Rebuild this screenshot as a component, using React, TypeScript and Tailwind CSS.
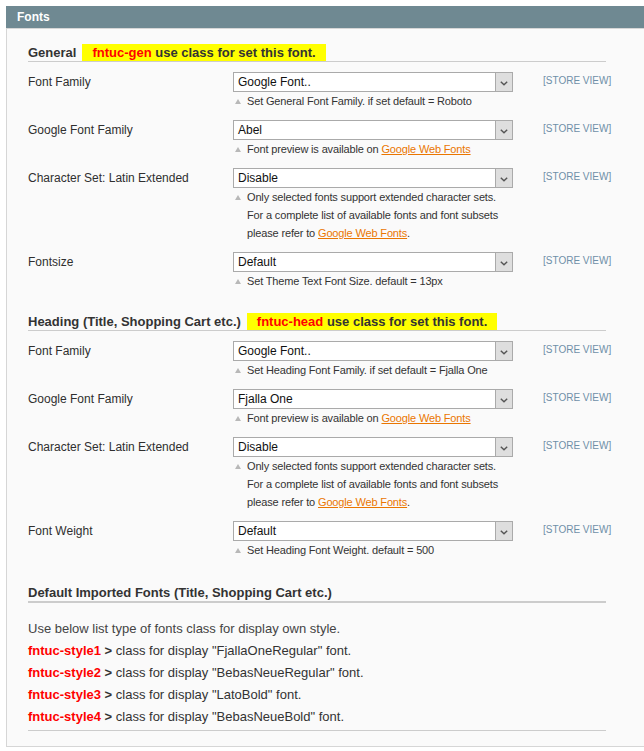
import React from "react";

type Row = { label: string; value: string; note: React.ReactNode[] };

const Link = () => <span className="text-[#ea7601] underline">Google Web Fonts</span>;

const charsetNote: React.ReactNode[] = [
  "Only selected fonts support extended character sets.",
  "For a complete list of available fonts and font subsets",
  <>please refer to <Link />.</>,
];

const previewNote: React.ReactNode[] = [<>Font preview is available on <Link /></>];

const general: Row[] = [
  { label: "Font Family", value: "Google Font..", note: ["Set General Font Family. if set default = Roboto"] },
  { label: "Google Font Family", value: "Abel", note: previewNote },
  { label: "Character Set: Latin Extended", value: "Disable", note: charsetNote },
  { label: "Fontsize", value: "Default", note: ["Set Theme Text Font Size. default = 13px"] },
];

const heading: Row[] = [
  { label: "Font Family", value: "Google Font..", note: ["Set Heading Font Family. if set default = Fjalla One"] },
  { label: "Google Font Family", value: "Fjalla One", note: previewNote },
  { label: "Character Set: Latin Extended", value: "Disable", note: charsetNote },
  { label: "Font Weight", value: "Default", note: ["Set Heading Font Weight. default = 500"] },
];

function Select({ value }: { value: string }) {
  return (
    <div className="flex h-[20px] border border-[#aaaaaa] bg-white">
      <div className="flex-1 pl-[4px] text-[12px] leading-[18px] text-[#111]">{value}</div>
      <div className="flex w-[17px] items-center justify-center border-l border-[#aaaaaa] bg-[#dedede]">
        <svg width="8" height="5" viewBox="0 0 8 5" className="mt-[2px]">
          <path d="M0.8 0.8 L4 3.8 L7.2 0.8" fill="none" stroke="#555" strokeWidth="1.4" />
        </svg>
      </div>
    </div>
  );
}

function Note({ lines }: { lines: React.ReactNode[] }) {
  return (
    <div className="flex text-[11px] leading-[18px] tracking-[-0.15px] text-[#333]">
      <div className="w-[14px] shrink-0 pl-[2px] pt-[7px]">
        <div className="h-0 w-0 border-b-[5px] border-l-[3px] border-r-[3px] border-b-[#b8b8b8] border-l-transparent border-r-transparent" />
      </div>
      <div className="whitespace-nowrap">
        {lines.map((l, i) => (
          <div key={i}>{l}</div>
        ))}
      </div>
    </div>
  );
}

function FieldRow({ row }: { row: Row }) {
  return (
    <div className="flex items-start pb-[10px]">
      <div className="w-[205px] shrink-0 text-[12px] leading-[20px] text-[#2f2f2f]">{row.label}</div>
      <div className="w-[280px] shrink-0">
        <Select value={row.value} />
        <Note lines={row.note} />
      </div>
      <div className="ml-[30px] shrink-0 whitespace-nowrap text-[10px] leading-[18px] text-[#6f8fa8]">[STORE VIEW]</div>
    </div>
  );
}

function SubHead({ title, cls }: { title: string; cls: string }) {
  return (
    <div className="flex h-[18px] border-b border-[#cccccc] text-[13px] font-bold leading-[17px]">
      <span className="text-[#333]">{title}</span>
      <span className="ml-[6px] bg-[#ffff00] px-[10px] text-[#333]">
        <span className="text-[#ff0000]">{cls}</span> use class for set this font.
      </span>
    </div>
  );
}

const styles = [
  ["fntuc-style1", "FjallaOneRegular"],
  ["fntuc-style2", "BebasNeueRegular"],
  ["fntuc-style3", "LatoBold"],
  ["fntuc-style4", "BebasNeueBold"],
];

export default function App() {
  return (
    <div className="h-[751px] w-[644px] overflow-hidden bg-white pl-[6px] pt-[6px] font-['Liberation_Sans',Arial,sans-serif]">
      <div className="w-[660px]">
        <div className="h-[22px] bg-[#6f8992] pl-[11px] text-[12px] font-bold leading-[22px] text-white">Fonts</div>
        <div className="border border-[#d6d6d6] bg-[#fafafa] pb-[15px] pl-[21px] pt-[15px]">
          <div className="w-[578px]">
            <SubHead title="General" cls="fntuc-gen" />
            <div className="mt-[10px]">
              {general.map((r, i) => (
                <FieldRow key={i} row={r} />
              ))}
            </div>
            <div className="mt-[13px]">
              <SubHead title="Heading (Title, Shopping Cart etc.)" cls="fntuc-head" />
            </div>
            <div className="mt-[10px]">
              {heading.map((r, i) => (
                <FieldRow key={i} row={r} />
              ))}
            </div>
            <div className="mt-[15px] h-[19px] border-b-2 border-[#cccccc] text-[13px] font-bold leading-[17px] text-[#333]">
              Default Imported Fonts (Title, Shopping Cart etc.)
            </div>
            <div className="mt-[15px] border-b border-[#cccccc] pb-[2px] text-[13px] leading-[22px] text-[#333]">
              <div className="text-[#444]">Use below list type of fonts class for display own style.</div>
              {styles.map(([c, f]) => (
                <div key={c}>
                  <span className="font-bold text-[#ff0000]">{c}</span> <span className="font-bold">&gt;</span> class for display "{f}" font.
                </div>
              ))}
            </div>
          </div>
        </div>
      </div>
    </div>
  );
}
